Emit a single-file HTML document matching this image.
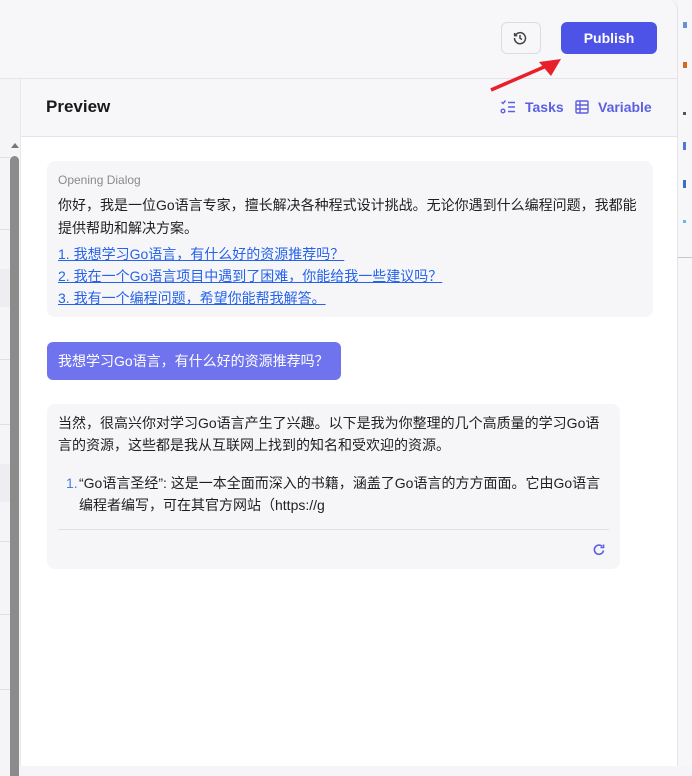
<!DOCTYPE html>
<html><head><meta charset="utf-8"><style>
*{margin:0;padding:0;box-sizing:border-box}
body{width:692px;height:766px;overflow:hidden;background:#f5f5f7;font-family:"Liberation Sans","Noto Sans CJK SC",sans-serif;position:relative;color:#1f1f1f}
.abs{position:absolute}
.top{left:0;top:0;width:678px;height:79px;background:#f7f7f9;border-bottom:1px solid #e4e4e8;border-right:1px solid #e4e4e8;border-top-right-radius:10px}
.right{left:678px;top:0;width:14px;height:766px;background:#f7f7f9}
.left{left:0;top:79px;width:21px;height:687px;background:#f5f5f7;border-right:1px solid #e8e8ec}
.panel{left:21px;top:79px;width:657px;height:687px;background:#fff;border-right:1px solid #e4e4e8}
.hdr{left:0;top:0;width:656px;height:58px;background:#f7f7f9;border-bottom:1px solid #e4e4e8}
.card{background:#f6f6f8;border-radius:8px}
.t{font-size:14px;line-height:22px}
a{color:#2563eb;text-decoration:underline}
</style></head><body>
<div class="abs top"></div>
<div class="abs right">
<div class="abs" style="left:5px;top:22px;width:4px;height:6px;background:#6b8fd6"></div>
<div class="abs" style="left:5px;top:62px;width:4px;height:6px;background:#d9661e"></div>
<div class="abs" style="left:5px;top:112px;width:3px;height:3px;background:#555"></div>
<div class="abs" style="left:5px;top:142px;width:3px;height:8px;background:#4a7bd0"></div>
<div class="abs" style="left:5px;top:180px;width:3px;height:8px;background:#3a6fc8"></div>
<div class="abs" style="left:5px;top:220px;width:3px;height:3px;background:#5bc0e8"></div>
<div class="abs" style="left:0;top:257px;width:14px;height:1px;background:#c8c8cc"></div>
</div>
<div class="abs" style="left:501px;top:22px;width:40px;height:32px;border:1px solid #dcdce0;border-radius:6px;background:#f7f7f9"></div>
<svg class="abs" style="left:512px;top:30px" width="16" height="16" viewBox="0 0 16 16" fill="none" stroke="#444" stroke-width="1.5"><path d="M3.2 5.5A5.5 5.5 0 1 1 2.5 8"/><path d="M2.6 3v2.6h2.6"/><path d="M8 5v3.2l2 1.3"/></svg>
<div class="abs" style="left:561px;top:22px;width:96px;height:32px;background:#4e53e8;border-radius:6px;color:#fff;font-weight:bold;font-size:14px;line-height:32px;text-align:center">Publish</div>
<div class="abs left">
<div class="abs" style="left:0;top:78px;width:10px;height:1px;background:#e0e0e4"></div>
<div class="abs" style="left:0;top:150px;width:10px;height:1px;background:#e0e0e4"></div>
<div class="abs" style="left:0;top:190px;width:10px;height:38px;background:#eeeef2"></div>
<div class="abs" style="left:0;top:280px;width:10px;height:1px;background:#e0e0e4"></div>
<div class="abs" style="left:0;top:345px;width:10px;height:1px;background:#e0e0e4"></div>
<div class="abs" style="left:0;top:385px;width:10px;height:38px;background:#eeeef2"></div>
<div class="abs" style="left:0;top:462px;width:10px;height:1px;background:#e0e0e4"></div>
<div class="abs" style="left:0;top:535px;width:10px;height:1px;background:#e0e0e4"></div>
<div class="abs" style="left:0;top:610px;width:10px;height:1px;background:#e0e0e4"></div>
<svg class="abs" style="left:10px;top:62px" width="10" height="8"><path d="M1 7 L5 2 L9 7Z" fill="#777"/></svg>
<div class="abs" style="left:10px;top:77px;width:9px;height:620px;background:#8b8b8b;border-radius:5px 5px 0 0"></div>
</div>
<div class="abs panel">
<div class="abs hdr">
<div class="abs" style="left:25px;top:18px;font-size:17px;font-weight:bold;color:#1a1a1a">Preview</div>
<svg class="abs" style="left:479px;top:20px" width="16" height="16" viewBox="0 0 16 16" fill="none" stroke="#5b5fe0" stroke-width="1.4"><path d="M1.5 3l1.5 1.5 2.5-3"/><path d="M8 3.5h7M8 8h7M8 12.5h7"/><circle cx="3" cy="12" r="1.8"/></svg>
<div class="abs" style="left:504px;top:20px;font-size:14px;color:#5b5fe0;font-weight:bold">Tasks</div>
<svg class="abs" style="left:553px;top:20px" width="16" height="16" viewBox="0 0 16 16" fill="none" stroke="#5b5fe0" stroke-width="1.4"><rect x="2" y="2" width="12" height="12" rx="1"/><path d="M2 6h12M2 10h12M6 2v12"/></svg>
<div class="abs" style="left:577px;top:20px;font-size:14px;color:#5b5fe0;font-weight:bold">Variable</div>
</div>
<div class="abs card" style="left:26px;top:82px;width:606px;height:156px;padding:11px 11px">
<div style="font-size:12px;color:#8a8a8a;line-height:16px">Opening Dialog</div>
<div class="t" style="margin-top:6px;line-height:23px">你好，我是一位Go语言专家，擅长解决各种程式设计挑战。无论你遇到什么编程问题，我都能提供帮助和解决方案。</div>
<div class="t" style="margin-top:3px"><a>1. 我想学习Go语言，有什么好的资源推荐吗？</a><br><a>2. 我在一个Go语言项目中遇到了困难，你能给我一些建议吗？</a><br><a>3. 我有一个编程问题，希望你能帮我解答。</a></div>
</div>
<div class="abs" style="left:26px;top:263px;width:294px;height:38px;background:#6f74ee;border-radius:6px;color:#fff;font-size:14px;line-height:38px;padding-left:11px">我想学习Go语言，有什么好的资源推荐吗？</div>
<div class="abs card" style="left:26px;top:325px;width:573px;height:165px;padding:8px 11px">
<div class="t">当然，很高兴你对学习Go语言产生了兴趣。以下是我为你整理的几个高质量的学习Go语言的资源，这些都是我从互联网上找到的知名和受欢迎的资源。</div>
<div class="t" style="margin-top:16px;padding-left:21px;position:relative"><span style="position:absolute;left:8px;color:#4b7be0">1.</span>“Go语言圣经”: 这是一本全面而深入的书籍，涵盖了Go语言的方方面面。它由Go语言编程者编写，可在其官方网站（https://g</div>
<div class="abs" style="left:11px;top:125px;width:551px;height:1px;background:#e2e2e6"></div>
<svg class="abs" style="left:545px;top:139px" width="14" height="14" viewBox="0 0 14 14" fill="none" stroke="#5b5fe0" stroke-width="1.6"><path d="M11.5 7.5A4.6 4.6 0 1 1 10 3.2"/><path d="M11.5 1.5v3h-3"/></svg>
</div>
</div>
<svg class="abs" style="left:485px;top:52px;z-index:5" width="85" height="45"><path d="M6 38 L66 12" stroke="#e8202a" stroke-width="3.5"/><path d="M76 7 L54 10 L66 24 Z" fill="#e8202a"/></svg>
</body></html>
